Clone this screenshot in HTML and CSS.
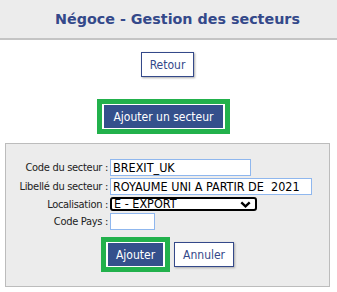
FILE: index.html
```html
<!DOCTYPE html>
<html lang="fr">
<head>
    <meta charset="UTF-8">
    <title>Négoce - Gestion des secteurs</title>
    <link rel="stylesheet" href="styles.css">
</head>
<body>
    <header class="page-header">
        <h1>Négoce - Gestion des secteurs</h1>
    </header>
    <div class="actions actions-back">
        <button class="btn btn-light">Retour</button>
    </div>
    <div class="actions actions-add">
        <span class="highlight">
            <button class="btn btn-dark">Ajouter un secteur</button>
        </span>
    </div>
    <form class="sector-form">
        <table class="form-table">
            <tr>
                <td class="label">Code du secteur :</td>
                <td><input type="text" class="field field-code" value="BREXIT_UK"></td>
            </tr>
            <tr>
                <td class="label">Libellé du secteur :</td>
                <td><input type="text" class="field field-label" value="ROYAUME UNI A PARTIR DE  2021"></td>
            </tr>
            <tr>
                <td class="label">Localisation :</td>
                <td>
                    <div class="select-box">
                        <span>E - EXPORT</span>
                        <svg class="select-arrow" width="11" height="7" viewBox="0 0 11 7">
                            <path d="M1.3 1.3 L5.5 5.3 L9.7 1.3" fill="none" stroke="#000" stroke-width="2.4"/>
                        </svg>
                    </div>
                </td>
            </tr>
            <tr>
                <td class="label">Code Pays :</td>
                <td><input type="text" class="field field-country"></td>
            </tr>
        </table>
        <div class="form-buttons">
            <span class="highlight">
                <button type="button" class="btn btn-dark">Ajouter</button>
            </span>
            <button type="button" class="btn btn-light">Annuler</button>
        </div>
    </form>
</body>
</html>
```

FILE: styles.css
```css
body {
    margin: 0;
    font-family: "DejaVu Sans Condensed", "DejaVu Sans", sans-serif;
    background-color: #ffffff;
}
.page-header {
    background-color: #ececec;
    border-bottom: 2px solid #c4c4c4;
    height: 38px;
    display: flex;
    align-items: center;
    justify-content: center;
    padding-left: 18px;
}
h1 {
    margin: 0;
    font-family: "DejaVu Sans", Verdana, sans-serif;
    font-size: 14.3px;
    color: #34498a;
}
.actions {
    display: flex;
    justify-content: center;
}
.actions-back {
    margin-top: 12px;
    padding-right: 2px;
}
.actions-add {
    margin-top: 22px;
    padding-right: 10px;
}
.highlight {
    display: inline-flex;
    border: 5px solid #22b14c;
    background-color: #ffffff;
}
.btn {
    font-family: "DejaVu Sans Condensed", "DejaVu Sans", sans-serif;
    font-size: 12px;
    height: 25px;
    padding: 0 8px;
    cursor: pointer;
}
.btn-light {
    background-color: #ffffff;
    color: #34498a;
    border: 1px solid #34498a;
    box-shadow: 1px 1px 2px #aaaaaa;
}
.btn-dark {
    background-color: #34508c;
    color: #ffffff;
    border: 1px solid #ffffff;
    border-left-width: 2px;
    border-right-width: 2px;
}
.actions-add .btn-dark {
    padding: 0 9px;
}
.sector-form {
    margin: 9px 7px 3px 5px;
    background-color: #ececec;
    border: 1px solid #bcbcbc;
    padding: 14px 0 14px 0;
}
.form-table {
    border-collapse: collapse;
}
.form-table td {
    padding: 1px 2px 1px 0;
    vertical-align: middle;
}
.label {
    width: 102px;
    text-align: right;
    font-size: 11px;
    line-height: 13px;
    letter-spacing: -0.3px;
    color: #222222;
    white-space: nowrap;
}
.field {
    box-sizing: border-box;
    display: block;
    font-family: "DejaVu Sans Condensed", "DejaVu Sans", sans-serif;
    font-size: 12.5px;
    height: 17px;
    border: 1px solid #8fb7ee;
    padding: 0 2px;
    background-color: #ffffff;
    color: #000000;
}
.field-code {
    width: 141px;
}
.field-label {
    width: 202px;
}
.field-country {
    width: 45px;
}
.select-box {
    box-sizing: border-box;
    display: flex;
    align-items: center;
    justify-content: space-between;
    width: 147px;
    height: 14px;
    border: 2px solid #000000;
    border-radius: 3px;
    padding: 0 4px 0 2px;
    background-color: #ffffff;
    font-size: 12.5px;
    line-height: 10px;
    color: #000000;
    cursor: pointer;
}
.form-buttons {
    display: flex;
    align-items: center;
    justify-content: center;
    gap: 4px;
    margin-top: 6px;
}
```
